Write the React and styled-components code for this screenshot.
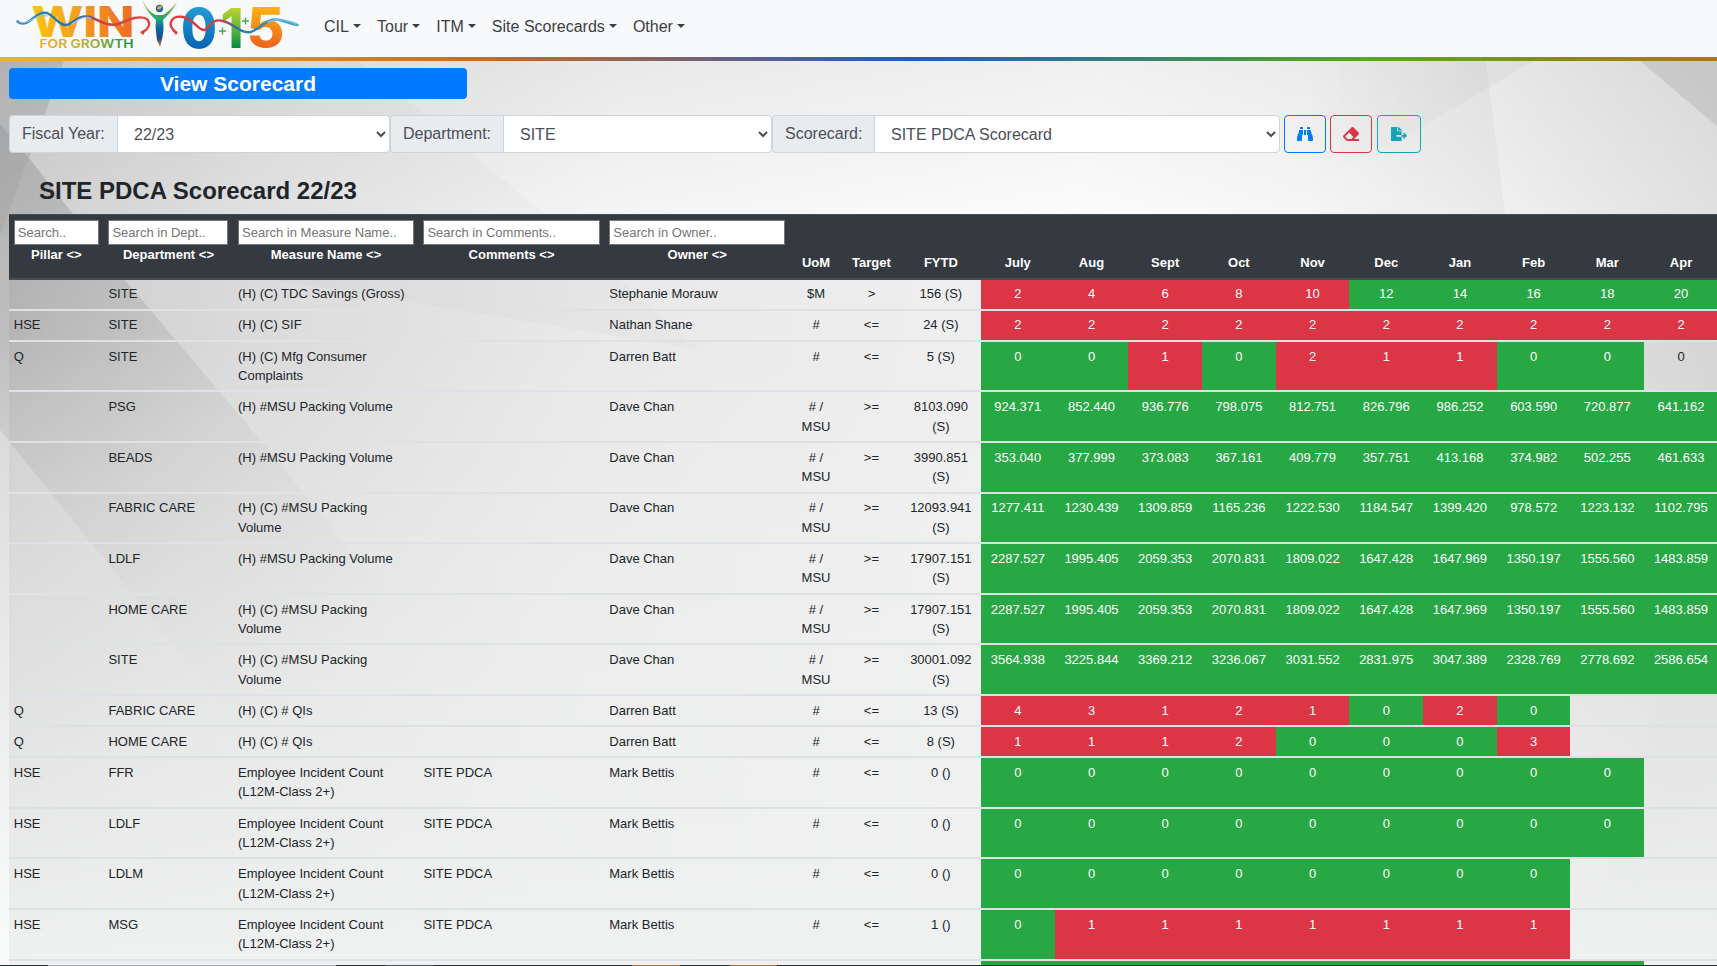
import React from "react";
import styled, { createGlobalStyle } from "styled-components";
import { FaBinoculars, FaEraser, FaFileExport } from "react-icons/fa";

const GlobalStyle = createGlobalStyle`
  *, *::before, *::after { box-sizing: border-box; }
  html, body { margin: 0; height: 100%; overflow: hidden; }
  body {
    font-family: Arial, "Liberation Sans", sans-serif;
    font-size: 16px;
    line-height: 1.5;
    color: #212529;
    background: #f0f0f0;
  }
`;

const Page = styled.div`
  position: relative;
  height: 966px;
  overflow: hidden;
`;

const Backdrop = styled.svg`
  position: absolute;
  inset: 0;
  z-index: -1;
`;

const Navbar = styled.nav`
  display: flex;
  align-items: flex-start;
  height: 57px;
  padding-left: 16px;
  background: #f8f9fa;
`;

const Logo = styled.svg`
  display: block;
  overflow: visible;
  width: 284px;
  height: 57px;
  margin-right: 16px;
  font-family: Inter, "Open Sans", sans-serif;
`;

const NavList = styled.div`
  display: flex;
  padding-top: 7px;
`;

const NavLink = styled.a`
  display: flex;
  align-items: center;
  padding: 8px;
  color: #3b3e42;
  &::after {
    content: "";
    margin: -2px 0 0 4.1px;
    border: 4.8px solid transparent;
    border-top-color: currentColor;
    border-bottom: 0;
  }
`;

const Rainbow = styled.div`
  height: 4px;
  background: linear-gradient(90deg, #efb32b 0%, #d66b12 27%, #1a5bd0 53%, #56ab12 80%, #b07412 100%);
`;

const Content = styled.main`
  padding: 7px 0 0 9px;
`;

const ViewButton = styled.button`
  display: block;
  width: 458px;
  height: 31px;
  padding: 0;
  border: 0;
  border-radius: 4px;
  background: #007bff;
  color: #fff;
  font: bold 21px/31px Arial, "Liberation Sans", sans-serif;
`;

const Filters = styled.div`
  display: flex;
  height: 38px;
  margin-top: 16px;
`;

const Group = styled.label`
  display: flex;
  width: ${(p) => p.$width}px;
`;

const GroupLabel = styled.span`
  flex: none;
  width: ${(p) => p.$width}px;
  padding: 6px 0 0 12px;
  border: 1px solid #ced4da;
  border-right: 0;
  border-radius: 4px 0 0 4px;
  background: #e9ecef;
  color: #495057;
`;

const Select = styled.select`
  flex: 1;
  min-width: 0;
  padding: 6px 0 6px 12px;
  border: 1px solid #ced4da;
  border-radius: 0 4px 4px 0;
  background-color: #fff;
  color: #495057;
  font: 16px/24px Arial, "Liberation Sans", sans-serif;
`;

const IconButton = styled.button`
  display: flex;
  align-items: center;
  justify-content: center;
  width: ${(p) => p.$width}px;
  height: 38px;
  margin-left: ${(p) => p.$gap}px;
  padding: 0;
  border: 1px solid ${(p) => p.$color};
  border-radius: 4px;
  background: transparent;
  color: ${(p) => p.$color};
  font-size: 16px;
`;

const Title = styled.h4`
  margin: 19px 0 5px 30px;
  font-size: 24px;
  font-weight: bold;
  line-height: 37px;
`;

const Table = styled.table`
  table-layout: fixed;
  width: 1782.6px;
  border-spacing: 0;
  background: rgba(0, 0, 0, 0.045);
  font-size: 13px;
  line-height: 19.5px;
`;

const HeadCell = styled.th`
  height: 65.6px;
  padding: 5.3px 4.8px;
  vertical-align: ${(p) => (p.$search ? "top" : "bottom")};
  border-top: 1px solid #454d55;
  border-bottom: 2px solid #454d55;
  background: #343a40;
  color: #fff;
`;

const Search = styled.input`
  display: block;
  width: 100%;
  height: 25px;
  padding: 1px 2px 1px 3px;
  border: 1px solid #767676;
  border-radius: 0;
  background: #fff;
  font: 13px Arial, "Liberation Sans", sans-serif;
  &::placeholder { color: #757575; }
`;

const fills = { r: "#dc3545", g: "#28a745" };

const Cell = styled.td`
  padding: 4.8px;
  vertical-align: top;
  text-align: ${(p) => (p.$center ? "center" : "left")};
  border-bottom: 2px solid #dee2e6;
  background: ${(p) => fills[p.$tone] || "transparent"};
  color: ${(p) => (fills[p.$tone] ? "#fff" : "#212529")};
`;

const Taskbar = styled.div`
  position: absolute;
  left: 0;
  right: 0;
  bottom: 0;
  display: flex;
  height: 1px;
  background: #22303c;
`;

const TaskItem = styled.span`
  width: ${(p) => p.$width}px;
  background: ${(p) => p.$color};
`;

const widths = [94.6, 129.5, 185.3, 185.7, 185.3, 52.2, 58.6, 80.2, ...Array(11).fill(73.65)];

const searchable = [
  ["Pillar", "Search.."],
  ["Department", "Search in Dept.."],
  ["Measure Name", "Search in Measure Name.."],
  ["Comments", "Search in Comments.."],
  ["Owner", "Search in Owner.."],
];
const plain = ["UoM", "Target", "FYTD", "July", "Aug", "Sept", "Oct", "Nov", "Dec", "Jan", "Feb", "Mar", "Apr", ""];

const tdc = "(H) (C) TDC Savings (Gross)";
const msu = "(H) #MSU Packing Volume";
const msuC = "(H) (C) #MSU Packing Volume";
const incident = "Employee Incident Count (L12M-Class 2+)";

// [pillar, department, measure, comments, owner, unit, target, fytd, monthly values, tones]
const rows = [
  ["", "SITE", tdc, "", "Stephanie Morauw", "$M", ">", "156 (S)", "2 4 6 8 10 12 14 16 18 20", "rrrrrggggg"],
  ["HSE", "SITE", "(H) (C) SIF", "", "Nathan Shane", "#", "<=", "24 (S)", "2 2 2 2 2 2 2 2 2 2", "rrrrrrrrrr"],
  ["Q", "SITE", "(H) (C) Mfg Consumer Complaints", "", "Darren Batt", "#", "<=", "5 (S)", "0 0 1 0 2 1 1 0 0 0", "ggrgrrrgg-"],
  ["", "PSG", msu, "", "Dave Chan", "# / MSU", ">=", "8103.090 (S)", "924.371 852.440 936.776 798.075 812.751 826.796 986.252 603.590 720.877 641.162", "gggggggggg"],
  ["", "BEADS", msu, "", "Dave Chan", "# / MSU", ">=", "3990.851 (S)", "353.040 377.999 373.083 367.161 409.779 357.751 413.168 374.982 502.255 461.633", "gggggggggg"],
  ["", "FABRIC CARE", msuC, "", "Dave Chan", "# / MSU", ">=", "12093.941 (S)", "1277.411 1230.439 1309.859 1165.236 1222.530 1184.547 1399.420 978.572 1223.132 1102.795", "gggggggggg"],
  ["", "LDLF", msu, "", "Dave Chan", "# / MSU", ">=", "17907.151 (S)", "2287.527 1995.405 2059.353 2070.831 1809.022 1647.428 1647.969 1350.197 1555.560 1483.859", "gggggggggg"],
  ["", "HOME CARE", msuC, "", "Dave Chan", "# / MSU", ">=", "17907.151 (S)", "2287.527 1995.405 2059.353 2070.831 1809.022 1647.428 1647.969 1350.197 1555.560 1483.859", "gggggggggg"],
  ["", "SITE", msuC, "", "Dave Chan", "# / MSU", ">=", "30001.092 (S)", "3564.938 3225.844 3369.212 3236.067 3031.552 2831.975 3047.389 2328.769 2778.692 2586.654", "gggggggggg"],
  ["Q", "FABRIC CARE", "(H) (C) # QIs", "", "Darren Batt", "#", "<=", "13 (S)", "4 3 1 2 1 0 2 0", "rrrrrgrg"],
  ["Q", "HOME CARE", "(H) (C) # QIs", "", "Darren Batt", "#", "<=", "8 (S)", "1 1 1 2 0 0 0 3", "rrrrgggr"],
  ["HSE", "FFR", incident, "SITE PDCA", "Mark Bettis", "#", "<=", "0 ()", "0 0 0 0 0 0 0 0 0", "ggggggggg"],
  ["HSE", "LDLF", incident, "SITE PDCA", "Mark Bettis", "#", "<=", "0 ()", "0 0 0 0 0 0 0 0 0", "ggggggggg"],
  ["HSE", "LDLM", incident, "SITE PDCA", "Mark Bettis", "#", "<=", "0 ()", "0 0 0 0 0 0 0 0", "gggggggg"],
  ["HSE", "MSG", incident, "SITE PDCA", "Mark Bettis", "#", "<=", "1 ()", "0 1 1 1 1 1 1 1", "grrrrrrr"],
  ["", "", "", "", "", "", "", "", "", "ggggggggg"],
];

const tasks = [
  [48, "#22303c"], [288, "#a9adb0"], [50, "#22303c"], [48, "#4b5560"],
  [198, "#22303c"], [48, "#ac682f"], [50, "#22303c"], [47, "#ac682f"],
];

function BrandLogo() {
  return (
    <Logo viewBox="16 0 284 57">
      <defs>
        <linearGradient id="win"><stop offset="0" stopColor="#fcc50b" /><stop offset=".5" stopColor="#f49a22" /><stop offset="1" stopColor="#ee6a20" /></linearGradient>
        <linearGradient id="growth"><stop offset="0" stopColor="#f5a623" /><stop offset=".5" stopColor="#b5ae2c" /><stop offset="1" stopColor="#149047" /></linearGradient>
        <linearGradient id="zero" x2="0" y2="1"><stop offset="0.1" stopColor="#27a4dc" /><stop offset=".85" stopColor="#0563b0" /></linearGradient>
        <linearGradient id="one" x2="0" y2="1"><stop offset="0.15" stopColor="#c8d92b" /><stop offset=".5" stopColor="#6fb83a" /><stop offset=".8" stopColor="#078c45" /></linearGradient>
        <linearGradient id="five" x2="0" y2="1"><stop offset="0.15" stopColor="#fbb814" /><stop offset=".8" stopColor="#f0641e" /></linearGradient>
        <linearGradient id="man" gradientUnits="userSpaceOnUse" x1="0" x2="0" y1="0" y2="47"><stop offset="0" stopColor="#f08a24" /><stop offset=".2" stopColor="#6db33f" /><stop offset=".42" stopColor="#1ba37c" /><stop offset=".6" stopColor="#0e62a8" /><stop offset=".82" stopColor="#1b4f86" /><stop offset="1" stopColor="#ee7a20" /></linearGradient>
        <linearGradient id="ribbonL" gradientUnits="userSpaceOnUse" x1="17" x2="150" y1="0" y2="0"><stop offset="0" stopColor="#2b87bd" /><stop offset=".45" stopColor="#2773aa" /><stop offset=".62" stopColor="#c4404a" /><stop offset="1" stopColor="#e8433a" /></linearGradient>
        <linearGradient id="ribbonR" gradientUnits="userSpaceOnUse" x1="170" x2="298" y1="0" y2="0"><stop offset="0" stopColor="#e23c38" /><stop offset=".42" stopColor="#c73f48" /><stop offset=".52" stopColor="#2676ad" /><stop offset="1" stopColor="#48a4d1" /></linearGradient>
      </defs>
      <text x="31.500" y="36.7" fontSize="42" fontWeight="800" textLength="103" lengthAdjust="spacingAndGlyphs" fill="url(#win)">WIN</text>
      <text x="39.500" y="48" fontSize="11.8" fontWeight="600" textLength="94" lengthAdjust="spacingAndGlyphs" fill="url(#growth)">FOR GROWTH</text>
      <text x="181" y="47.500" fontSize="55.5" fontWeight="800" textLength="36" lengthAdjust="spacingAndGlyphs" fill="url(#zero)">0</text>
      <text x="220.500" y="47.500" fontSize="55.5" fontWeight="800" textLength="23" lengthAdjust="spacingAndGlyphs" fill="url(#one)">1</text>
      <text x="246.500" y="47" fontSize="55" fontWeight="800" textLength="38" lengthAdjust="spacingAndGlyphs" fill="url(#five)">5</text>
      <g fill="none" strokeLinecap="round">
        <path d="M17.500 21.500C28 30 35 10 47 13C56 17 59 26 67 25C75 22 79 14 90 17C99 20 107 27 118 24C130 19 139 15 147 19C152 25 147 30 142.500 32" stroke="url(#ribbonL)" strokeWidth="2.400" />
        <path d="M19 22C29 26 37 12 47 16M72 24C78 20 83 15 91 18.500" stroke="#8dc8e5" strokeWidth="1.200" />
        <path d="M175.500 32C166 24 172 15 183 17C194 19 198 31 205 30C210 26 213 18 223 21C235 24 240 34 251 32C263 27 267 17 280 20C287 22 291 24 297.500 25" stroke="url(#ribbonR)" strokeWidth="2.400" />
        <path d="M268 22C279 17.500 286 20 296 23.500" stroke="#7bc3e4" strokeWidth="1.500" />
      </g>
      <path d="M140 32L147 28.500L143 35ZM172 29.500L178 32L176 35Z" fill="#e23c38" />
      <path d="M142.500 0C146 8 151 13 156 15H163C168 12 172 8 177 2C172 12 166 17 163 20C164.500 30 162.500 38 160 47L157 40C156 32 155 26 156 20C150 15 145 8 142.500 0Z" fill="url(#man)" />
      <circle cx="159.500" cy="8.500" r="3.700" fill="#176bac" />
      <path d="M157 9C157 6 161 5 162.500 6.500C161.500 8 159.500 10.500 157 9Z" fill="#f3a22a" />
      <path d="M219 31h7M222.500 27.500v7M242 21h7M245.500 17.500v7" stroke="#4ea554" strokeWidth="1.400" />
    </Logo>
  );
}

function PageBackdrop() {
  return (
    <Backdrop width="1717" height="966" viewBox="0 0 1717 966">
      <defs>
        <linearGradient id="base" gradientUnits="userSpaceOnUse" x1="0" y1="150" x2="1717" y2="400">
          <stop offset="0" stopColor="#d2d2d2" /><stop offset=".15" stopColor="#e4e4e4" /><stop offset=".35" stopColor="#f4f4f4" />
          <stop offset=".62" stopColor="#fbfbfb" /><stop offset=".85" stopColor="#f1f1f1" /><stop offset="1" stopColor="#dedede" />
        </linearGradient>
        <linearGradient id="shade" gradientUnits="userSpaceOnUse" x1="30" y1="200" x2="380" y2="640">
          <stop offset="0" stopColor="#000" stopOpacity=".13" /><stop offset=".5" stopColor="#000" stopOpacity=".05" /><stop offset="1" stopColor="#000" stopOpacity="0" />
        </linearGradient>
        <linearGradient id="bottom" x2="0" y2="1">
          <stop offset=".35" stopColor="#fafcfb" stopOpacity="0" /><stop offset="1" stopColor="#fafcfb" />
        </linearGradient>
        <linearGradient id="topShade" x2="0" y2="1">
          <stop offset="0" stopColor="#000" stopOpacity=".045" /><stop offset="1" stopColor="#000" stopOpacity="0" />
        </linearGradient>
        <linearGradient id="wedge" gradientUnits="userSpaceOnUse" x1="1300" y1="0" x2="1490" y2="0">
          <stop offset="0" stopColor="#000" stopOpacity="0" /><stop offset="1" stopColor="#000" stopOpacity=".03" />
        </linearGradient>
      </defs>
      <rect width="1717" height="966" fill="url(#base)" />
      <rect y="61" width="1717" height="150" fill="url(#topShade)" />
      <path d="M0 61H360L545 214L700 350L0 235Z" fill="#000" opacity=".015" />
      <path d="M0 61H64L29 158L0 235Z" fill="#000" opacity=".09" />
      <path d="M0 124L29 158L0 235Z" fill="#000" opacity=".08" />
      <path d="M29 158L125 280L262 442L480 710L250 740L0 430V235Z" fill="url(#shade)" />
      <path d="M1300 61H1533L1489 87L1420 128L1300 190Z" fill="url(#wedge)" />
      <path d="M1300 61H1486L1489 87L1505 214H1300Z" fill="url(#wedge)" />
      <path d="M1640 61H1717V126Z" fill="#000" opacity=".08" />
      <path d="M1717 560V780L1580 966L1660 680Z" fill="#000" opacity=".012" />
      <rect width="1717" height="966" fill="url(#bottom)" />
    </Backdrop>
  );
}

function ScoreRow({ row }) {
  const values = row[8] ? row[8].split(" ") : [];
  return (
    <tr>
      {row.slice(0, 8).map((text, i) => (
        <Cell key={i} $center={i > 4}>{text || "\u00a0"}</Cell>
      ))}
      {Array.from({ length: 11 }, (_, i) => (
        <Cell key={i} $center $tone={row[9][i]}>{values[i]}</Cell>
      ))}
    </tr>
  );
}

function FilterSelect({ width, label, labelWidth, value }) {
  return (
    <Group $width={width}>
      <GroupLabel $width={labelWidth}>{label}</GroupLabel>
      <Select defaultValue={value}><option>{value}</option></Select>
    </Group>
  );
}

export default function App() {
  return (
    <Page>
      <GlobalStyle />
      <PageBackdrop />
      <Navbar>
        <BrandLogo />
        <NavList>
          {["CIL", "Tour", "ITM", "Site Scorecards", "Other"].map((name) => <NavLink key={name}>{name}</NavLink>)}
        </NavList>
      </Navbar>
      <Rainbow />
      <Content>
        <ViewButton>View Scorecard</ViewButton>
        <Filters>
          <FilterSelect width={381} label="Fiscal Year:" labelWidth={108} value="22/23" />
          <FilterSelect width={382} label="Department:" labelWidth={113} value="SITE" />
          <FilterSelect width={508} label="Scorecard:" labelWidth={102} value="SITE PDCA Scorecard" />
          <IconButton $width={42} $gap={4} $color="#007bff"><FaBinoculars /></IconButton>
          <IconButton $width={42} $gap={4} $color="#dc3545"><FaEraser /></IconButton>
          <IconButton $width={44} $gap={5} $color="#17a2b8"><FaFileExport /></IconButton>
        </Filters>
        <Title>SITE PDCA Scorecard 22/23</Title>
        <Table>
          <colgroup>{widths.map((w, i) => <col key={i} style={{ width: w }} />)}</colgroup>
          <thead>
            <tr>
              {searchable.map(([name, hint]) => (
                <HeadCell key={name} $search><Search placeholder={hint} />{name} &lt;&gt;</HeadCell>
              ))}
              {plain.map((name) => <HeadCell key={name}>{name}</HeadCell>)}
            </tr>
          </thead>
          <tbody>{rows.map((row, i) => <ScoreRow key={i} row={row} />)}</tbody>
        </Table>
      </Content>
      <Taskbar>{tasks.map(([w, c], i) => <TaskItem key={i} $width={w} $color={c} />)}</Taskbar>
    </Page>
  );
}
